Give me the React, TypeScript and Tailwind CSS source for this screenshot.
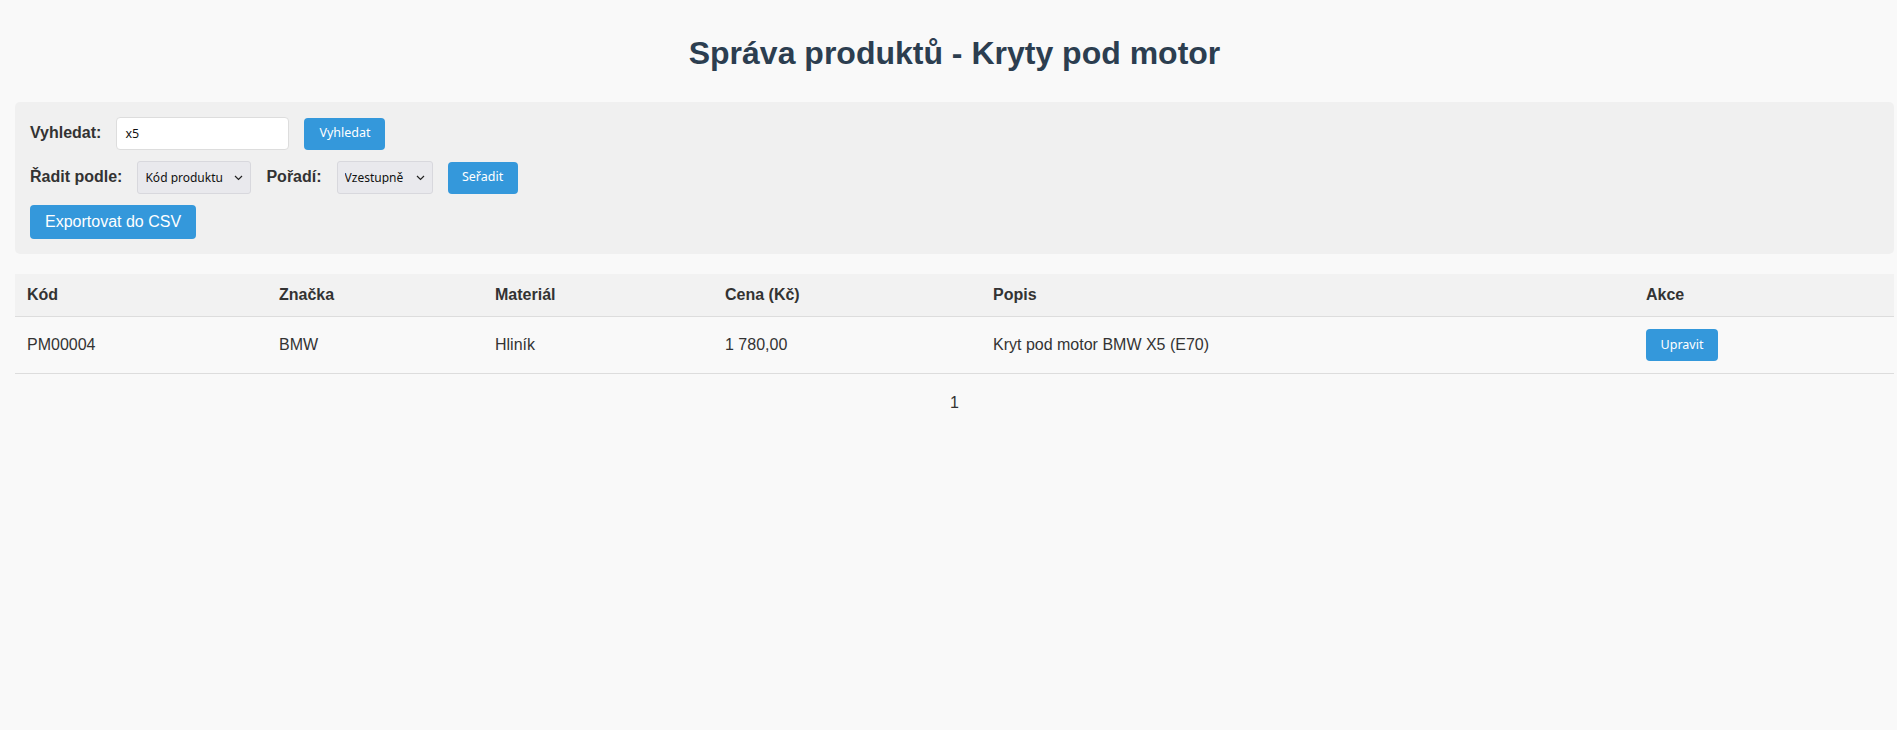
import { useState } from 'react';

const products = [
    { code: 'PM00004', brand: 'BMW', material: 'Hliník', price: '1 780,00', description: 'Kryt pod motor BMW X5 (E70)' },
];

function Chevron() {
    return (
        <svg width="9" height="6" viewBox="0 0 9 6" fill="none" className="pointer-events-none absolute right-[8px] top-1/2 -translate-y-1/2">
            <path d="M1 1l3.5 3.5L8 1" stroke="#222" strokeWidth="1.2" />
        </svg>
    );
}

function Select({ value, options, width }: { value: string; options: string[]; width: string }) {
    return (
        <div className={`relative ${width}`}>
            <select
                defaultValue={value}
                className="h-[33px] w-full appearance-none rounded-[3px] border border-[#d8d8dd] bg-[#e9e9ed] pl-[7px] pr-[18px] font-['Noto_Sans',sans-serif] text-[12px] text-[#111] outline-none"
            >
                {options.map((o) => (
                    <option key={o}>{o}</option>
                ))}
            </select>
            <Chevron />
        </div>
    );
}

export default function App() {
    const [query, setQuery] = useState('x5');

    return (
        <div className="min-h-screen bg-[#f9f9f9] pl-[15px] pr-[3px] pt-[35px] font-['Liberation_Sans',Arial,sans-serif] text-[16px] leading-[1.15] text-[#333]">
            <h1 className="mb-[30px] text-center text-[32px] font-bold leading-[37px] text-[#2c3e50]">
                Správa produktů - Kryty pod motor
            </h1>

            {/* Filters */}
            <div className="flex flex-col gap-[11px] rounded-[5px] bg-[#f0f0f0] p-[15px]">
                <div className="flex items-center gap-[15px]">
                    <label className="font-bold">Vyhledat:</label>
                    <input
                        value={query}
                        onChange={(e) => setQuery(e.target.value)}
                        className="h-[33px] w-[173px] rounded-[4px] border border-[#ddd] bg-white px-[8px] font-['Noto_Sans',sans-serif] text-[12.5px] text-[#111] outline-none"
                    />
                    <button className="h-[32px] w-[81px] rounded-[4px] bg-[#3498db] font-['Noto_Sans',sans-serif] text-[12.5px] text-white">
                        Vyhledat
                    </button>
                </div>
                <div className="flex items-center gap-[15px]">
                    <label className="font-bold">Řadit podle:</label>
                    <Select value="Kód produktu" options={['Kód produktu', 'Značka', 'Materiál', 'Cena']} width="w-[114px]" />
                    <label className="font-bold">Pořadí:</label>
                    <Select value="Vzestupně" options={['Vzestupně', 'Sestupně']} width="w-[96px]" />
                    <button className="h-[32px] w-[70px] rounded-[4px] bg-[#3498db] font-['Noto_Sans',sans-serif] text-[12.5px] text-white">
                        Seřadit
                    </button>
                </div>
                <div className="flex">
                    <button className="h-[34px] rounded-[4px] bg-[#3498db] px-[15px] text-[16px] text-white">
                        Exportovat do CSV
                    </button>
                </div>
            </div>

            {/* Products table */}
            <table className="mt-[20px] w-full table-fixed border-collapse">
                <thead>
                    <tr className="bg-[#f2f2f2] text-left">
                        <th className="w-[252px] border-b border-[#ddd] p-[12px] font-bold">Kód</th>
                        <th className="w-[216px] border-b border-[#ddd] p-[12px] font-bold">Značka</th>
                        <th className="w-[230px] border-b border-[#ddd] p-[12px] font-bold">Materiál</th>
                        <th className="w-[268px] border-b border-[#ddd] p-[12px] font-bold">Cena (Kč)</th>
                        <th className="w-[653px] border-b border-[#ddd] p-[12px] font-bold">Popis</th>
                        <th className="border-b border-[#ddd] p-[12px] font-bold">Akce</th>
                    </tr>
                </thead>
                <tbody>
                    {products.map((p) => (
                        <tr key={p.code}>
                            <td className="border-b border-[#ddd] p-[12px]">{p.code}</td>
                            <td className="border-b border-[#ddd] p-[12px]">{p.brand}</td>
                            <td className="border-b border-[#ddd] p-[12px]">{p.material}</td>
                            <td className="border-b border-[#ddd] p-[12px]">{p.price}</td>
                            <td className="border-b border-[#ddd] p-[12px]">{p.description}</td>
                            <td className="border-b border-[#ddd] p-[12px]">
                                <button className="block h-[32px] w-[72px] rounded-[4px] bg-[#3498db] font-['Noto_Sans',sans-serif] text-[12.5px] text-white">
                                    Upravit
                                </button>
                            </td>
                        </tr>
                    ))}
                </tbody>
            </table>

            {/* Pagination */}
            <div className="mt-[20px] text-center">1</div>
        </div>
    );
}
